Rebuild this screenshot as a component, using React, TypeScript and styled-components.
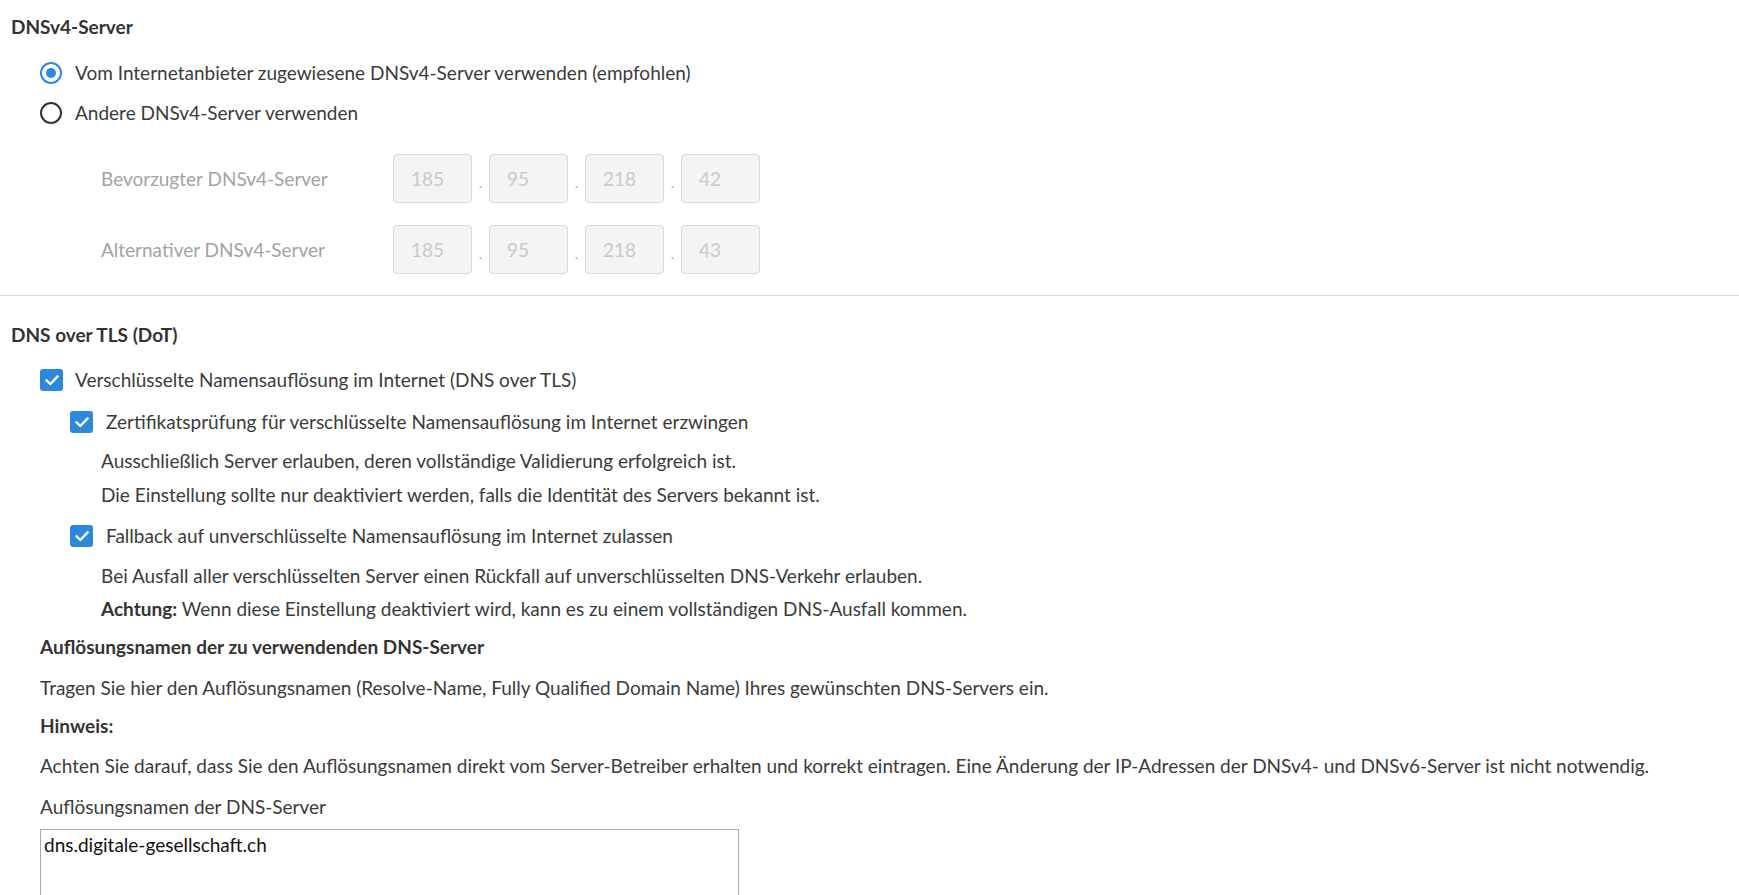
import React from "react";
import styled, { createGlobalStyle } from "styled-components";

const FONT = `"Lato", "Source Sans Pro", "Liberation Sans", sans-serif`;
const BLUE = "#2d87dc";
const TEXT = "#3b3b3b";
const FS = 19;

const Global = createGlobalStyle`
  html, body { margin: 0; padding: 0; background: #ffffff; }
  body { font-family: ${FONT}; font-size: ${FS}px; color: ${TEXT}; }
  * { box-sizing: border-box; }
`;

const Page = styled.div`
  padding: 15px 0 0 11px;
  display: flex;
  flex-direction: column;
`;

const SectionTitle = styled.h2<{ $mt?: number }>`
  margin: ${(p) => p.$mt ?? 0}px 0 0 0;
  font-size: ${FS}px;
  line-height: 24px;
  font-weight: 700;
  color: #333333;
`;

const SubTitle = styled.h3<{ $mt?: number }>`
  margin: ${(p) => p.$mt ?? 0}px 0 0 29px;
  font-size: ${FS}px;
  line-height: 24px;
  font-weight: 700;
  color: #333333;
`;

const OptionRow = styled.label<{ $indent: number; $mt: number; $gap?: number }>`
  display: flex;
  align-items: center;
  gap: ${(p) => p.$gap ?? 13}px;
  margin: ${(p) => p.$mt}px 0 0 ${(p) => p.$indent}px;
  height: 24px;
  line-height: 24px;
  color: ${TEXT};
`;

const RadioCircle = styled.span<{ $checked?: boolean }>`
  width: 22px;
  height: 22px;
  flex: none;
  border-radius: 50%;
  border: 2px solid ${(p) => (p.$checked ? BLUE : "#333333")};
  display: flex;
  align-items: center;
  justify-content: center;
  &::after {
    content: "";
    width: 10px;
    height: 10px;
    border-radius: 50%;
    background: ${(p) => (p.$checked ? BLUE : "transparent")};
  }
`;

const CheckBox = styled.span`
  width: 23px;
  height: 22px;
  flex: none;
  border-radius: 3px;
  background: ${BLUE};
  display: flex;
  align-items: center;
  justify-content: center;
`;

const IpRow = styled.div<{ $mt: number }>`
  display: flex;
  align-items: center;
  margin: ${(p) => p.$mt}px 0 0 90px;
  height: 49px;
`;

const IpLabel = styled.span`
  width: 292px;
  color: #a3a3a3;
  line-height: 24px;
`;

const IpGroup = styled.div`
  display: flex;
  align-items: center;
`;

const IpBox = styled.div`
  width: 79px;
  height: 49px;
  border: 1px solid #d9d9d9;
  border-radius: 4px;
  background: #f4f4f4;
  color: #c9c9c9;
  display: flex;
  align-items: center;
  padding-left: 17px;
`;

const IpDot = styled.span`
  width: 17px;
  text-align: center;
  color: #a8a8a8;
  font-size: 14px;
  align-self: center;
  padding-top: 8px;
`;

const Divider = styled.hr`
  margin: 21px 0 0 0;
  border: none;
  border-top: 1px solid #d8d8d8;
  height: 0;
`;

const TextLine = styled.p<{ $mt: number; $indent: number }>`
  margin: ${(p) => p.$mt}px 0 0 ${(p) => p.$indent}px;
  line-height: 24px;
  color: ${TEXT};
  white-space: nowrap;
`;

const Strong = styled.strong`
  font-weight: 700;
  color: #333333;
`;

const TextArea = styled.textarea`
  margin: 10px 0 0 29px;
  width: 699px;
  height: 110px;
  border: 1px solid #a9a9a9;
  border-radius: 0;
  padding: 3px 3px;
  font-family: ${FONT};
  font-size: ${FS}px;
  line-height: 24px;
  color: #111111;
  resize: none;
  outline: none;
`;

const Check = () => (
  <svg width="16" height="16" viewBox="0 0 16 16" fill="none">
    <path d="M2.5 8.3 L6.3 12 L13.6 4.3" stroke="#ffffff" strokeWidth="2.4" strokeLinecap="round" strokeLinejoin="round" />
  </svg>
);

const IpFields = ({ parts }: { parts: string[] }) => (
  <IpGroup>
    {parts.map((p, i) => (
      <React.Fragment key={i}>
        {i > 0 && <IpDot>.</IpDot>}
        <IpBox>{p}</IpBox>
      </React.Fragment>
    ))}
  </IpGroup>
);

export default function App() {
  return (
    <>
      <Global />
      <Page>
        <SectionTitle>DNSv4-Server</SectionTitle>
        <OptionRow $indent={29} $mt={22}>
          <RadioCircle $checked />
          Vom Internetanbieter zugewiesene DNSv4-Server verwenden (empfohlen)
        </OptionRow>
        <OptionRow $indent={29} $mt={16}>
          <RadioCircle />
          Andere DNSv4-Server verwenden
        </OptionRow>
        <IpRow $mt={29}>
          <IpLabel>Bevorzugter DNSv4-Server</IpLabel>
          <IpFields parts={["185", "95", "218", "42"]} />
        </IpRow>
        <IpRow $mt={22}>
          <IpLabel>Alternativer DNSv4-Server</IpLabel>
          <IpFields parts={["185", "95", "218", "43"]} />
        </IpRow>
      </Page>
      <Divider />
      <Page>
        <SectionTitle $mt={12}>DNS over TLS (DoT)</SectionTitle>
        <OptionRow $indent={29} $mt={21} $gap={12}>
          <CheckBox><Check /></CheckBox>
          Verschlüsselte Namensauflösung im Internet (DNS over TLS)
        </OptionRow>
        <OptionRow $indent={59} $mt={18} $gap={13}>
          <CheckBox><Check /></CheckBox>
          Zertifikatsprüfung für verschlüsselte Namensauflösung im Internet erzwingen
        </OptionRow>
        <TextLine $mt={15} $indent={90}>
          Ausschließlich Server erlauben, deren vollständige Validierung erfolgreich ist.
        </TextLine>
        <TextLine $mt={10} $indent={90}>
          Die Einstellung sollte nur deaktiviert werden, falls die Identität des Servers bekannt ist.
        </TextLine>
        <OptionRow $indent={59} $mt={17} $gap={13}>
          <CheckBox><Check /></CheckBox>
          Fallback auf unverschlüsselte Namensauflösung im Internet zulassen
        </OptionRow>
        <TextLine $mt={16} $indent={90}>
          Bei Ausfall aller verschlüsselten Server einen Rückfall auf unverschlüsselten DNS-Verkehr erlauben.
        </TextLine>
        <TextLine $mt={9} $indent={90}>
          <Strong>Achtung:</Strong> Wenn diese Einstellung deaktiviert wird, kann es zu einem vollständigen DNS-Ausfall kommen.
        </TextLine>
        <SubTitle $mt={14}>Auflösungsnamen der zu verwendenden DNS-Server</SubTitle>
        <TextLine $mt={17} $indent={29}>
          Tragen Sie hier den Auflösungsnamen (Resolve-Name, Fully Qualified Domain Name) Ihres gewünschten DNS-Servers ein.
        </TextLine>
        <SubTitle $mt={14}>Hinweis:</SubTitle>
        <TextLine $mt={16} $indent={29}>
          Achten Sie darauf, dass Sie den Auflösungsnamen direkt vom Server-Betreiber erhalten und korrekt eintragen. Eine Änderung der IP-Adressen der DNSv4- und DNSv6-Server ist nicht notwendig.
        </TextLine>
        <TextLine $mt={17} $indent={29}>
          Auflösungsnamen der DNS-Server
        </TextLine>
        <TextArea defaultValue="dns.digitale-gesellschaft.ch" />
      </Page>
    </>
  );
}
